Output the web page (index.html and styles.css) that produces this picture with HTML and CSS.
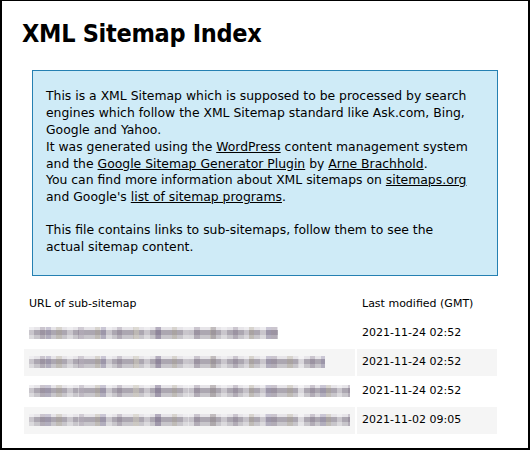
FILE: index.html
```
<!DOCTYPE html>
<html>
<head>
<meta charset="utf-8">
<title>XML Sitemap Index</title>
<link rel="stylesheet" href="styles.css">
</head>
<body>
<div class="frame">
  <div class="page">
    <h1 class="title">XML Sitemap Index</h1>
    <div class="intro">
      <p class="intro-p first">This is a XML Sitemap which is supposed to be processed by search<br>engines which follow the XML Sitemap standard like Ask.com, Bing,<br>Google and Yahoo.<br>It was generated using the <a href="#">WordPress</a> content management system<br>and the <a href="#">Google Sitemap Generator Plugin</a> by <a href="#">Arne Brachhold</a>.<br>You can find more information about XML sitemaps on <a href="#">sitemaps.org</a><br>and Google's <a href="#">list of sitemap programs</a>.</p>
      <p class="intro-p last">This file contains links to sub-sitemaps, follow them to see the<br>actual sitemap content.</p>
    </div>
    <table class="maps">
      <tr>
        <th class="col-url">URL of sub-sitemap</th>
        <th class="col-date">Last modified (GMT)</th>
      </tr>
      <tr>
        <td class="cell-url"><span class="blur b1"></span></td>
        <td class="cell-date">2021-11-24 02:52</td>
      </tr>
      <tr class="high">
        <td class="cell-url"><span class="blur b2"></span></td>
        <td class="cell-date">2021-11-24 02:52</td>
      </tr>
      <tr>
        <td class="cell-url"><span class="blur b3"></span></td>
        <td class="cell-date">2021-11-24 02:52</td>
      </tr>
      <tr class="high">
        <td class="cell-url"><span class="blur b4"></span></td>
        <td class="cell-date">2021-11-02 09:05</td>
      </tr>
    </table>
  </div>
</div>
</body>
</html>
```
FILE: styles.css
```
html, body {
  margin: 0;
  padding: 0;
  background: #fff;
}

body {
  font-family: "DejaVu Sans", Verdana, sans-serif;
  color: #000;
}

.frame {
  box-sizing: border-box;
  width: 530px;
  height: 450px;
  border: 2px solid #000;
  border-top-width: 1px;
  overflow: hidden;
}

.page {
  padding-left: 20px;
}

.title {
  margin: 18px 0 0 0;
  font-family: "DejaVu Sans Condensed", "DejaVu Sans", sans-serif;
  font-weight: bold;
  font-size: 25px;
  letter-spacing: -0.3px;
  line-height: 29px;
}

.intro {
  box-sizing: border-box;
  width: 466px;
  margin: 22px 0 13px 10px;
  padding: 5px 13px;
  background: #cfebf7;
  border: 1px solid #2580b2;
}

.intro-p {
  margin: 0;
  font-size: 12.4px;
  line-height: 16.87px;
  white-space: nowrap;
}

.intro-p.first {
  margin: 12px 0 16px 0;
}

.intro-p.last {
  margin: 0 0 14px 0;
}

.intro a {
  color: #000;
  text-decoration: underline;
}

.maps {
  border-collapse: separate;
  border-spacing: 2px;
  margin-left: 0;
  font-size: 11px;
  line-height: 14px;
}

.maps th {
  text-align: left;
  font-weight: normal;
  padding: 6px 30px 7px 5px;
}

.maps th.col-date {
  padding-right: 24px;
}

.cell-url {
  padding: 7px 5px 8px 5px;
}

.cell-date {
  padding: 6px 5px 7px 5px;
  white-space: nowrap;
}

.high td {
  background: #f5f5f5;
}

.blur {
  display: block;
  height: 12px;
  background:
    repeating-linear-gradient(90deg,
      rgba(255,255,255,.35) 0 5.5px, transparent 5.5px 11px,
      rgba(90,70,100,.20) 11px 16.5px, transparent 16.5px 27.5px,
      rgba(160,150,110,.22) 27.5px 33px, transparent 33px 38.5px),
    repeating-linear-gradient(90deg,
      transparent 0 16.5px, rgba(100,90,140,.22) 16.5px 22px,
      transparent 22px 49.5px, rgba(255,255,255,.3) 49.5px 55px),
    linear-gradient(180deg, #e7e5e9 0 3px, #aca7b1 3px 8px, #c8c6cb 8px 12px);
}

.b1 { width: 249px; }
.b2 { width: 296px; }
.b3 { width: 321px; }
.b4 { width: 321px; }
```
